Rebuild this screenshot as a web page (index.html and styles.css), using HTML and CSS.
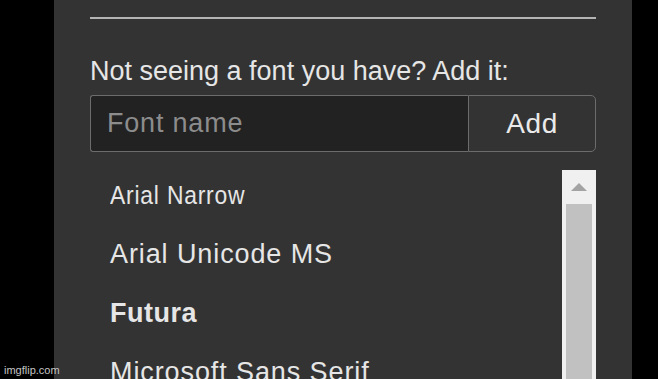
FILE: index.html
```html
<!DOCTYPE html>
<html>
<head>
    <title>Fonts</title>
    <meta name="viewport" content="width=device-width, initial-scale=1.0">
    <link rel="stylesheet" href="styles.css">
</head>
<body>
    <div class="side"></div>
    <div class="panel">
        <div class="rule"></div>
        <div class="label">Not seeing a font you have? Add it:</div>
        <div class="add-row">
            <input type="text" class="font-input" placeholder="Font name">
            <button class="add-button">Add</button>
        </div>
        <div class="list-box">
            <div class="font-list">
                <div class="font-item"><span class="narrow">Arial Narrow</span></div>
                <div class="font-item">Arial Unicode MS</div>
                <div class="font-item futura">Futura</div>
                <div class="font-item">Microsoft Sans Serif</div>
            </div>
            <div class="scrollbar">
                <div class="scroll-up"><span class="arrow"></span></div>
                <div class="scroll-thumb"></div>
            </div>
        </div>
    </div>
    <div class="watermark">imgflip.com</div>
</body>
</html>
```

FILE: styles.css
```css
html, body {
    height: 100%;
    margin: 0;
    overflow: hidden;
}
body {
    display: flex;
    background-color: #000;
    font-family: "Liberation Sans", Arial, sans-serif;
    position: relative;
}
.side {
    width: 54px;
    flex: none;
}
.panel {
    width: 578px;
    flex: none;
    box-sizing: border-box;
    padding: 17px 36px 0 36px;
    background-color: #333;
    display: flex;
    flex-direction: column;
    overflow: hidden;
}
.panel > * {
    flex: none;
}
.rule {
    height: 2px;
    background-color: #b4b4b4;
}
.label {
    margin-top: 36px;
    font-size: 27px;
    line-height: 32px;
    color: #e6e6e6;
}
.add-row {
    display: flex;
    margin-top: 8px;
    height: 57px;
}
.font-input {
    width: 378px;
    box-sizing: border-box;
    margin: 0;
    padding: 0 0 0 16px;
    background-color: #222;
    border: 1px solid #6c6c6c;
    border-right: none;
    border-radius: 3px 0 0 3px;
    font-family: "Liberation Sans", Arial, sans-serif;
    font-size: 27px;
    letter-spacing: 0.8px;
    color: #e6e6e6;
    outline: none;
}
.font-input::placeholder {
    color: #8c8c8c;
}
.add-button {
    flex: 1;
    margin: 0;
    padding: 0;
    background-color: #333;
    border: 1px solid #6c6c6c;
    border-radius: 0 5px 5px 0;
    font-family: "Liberation Sans", Arial, sans-serif;
    font-size: 28px;
    letter-spacing: 0.6px;
    color: #eaeaea;
}
.list-box {
    display: flex;
    margin-top: 14px;
}
.font-list {
    flex: 1;
    padding-left: 20px;
}
.font-item {
    height: 59px;
    line-height: 59px;
    font-size: 27px;
    letter-spacing: 0.9px;
    color: #e6e6e6;
    white-space: nowrap;
}
.narrow {
    display: inline-block;
    font-size: 26px;
    transform: scaleX(0.88);
    transform-origin: left center;
}
.futura {
    font-weight: bold;
    letter-spacing: 0.5px;
}
.scrollbar {
    width: 34px;
    margin-top: 4px;
    height: 260px;
    background-color: #f0f0f0;
    display: flex;
    flex-direction: column;
}
.scroll-up {
    height: 34px;
    display: flex;
    justify-content: center;
    align-items: center;
}
.arrow {
    width: 0;
    height: 0;
    border-left: 8px solid transparent;
    border-right: 8px solid transparent;
    border-bottom: 8px solid #a3a3a3;
}
.scroll-thumb {
    flex: 1;
    margin: 0 4px;
    background-color: #c1c1c1;
}
.watermark {
    position: absolute;
    left: 4px;
    bottom: 3px;
    font-size: 11px;
    color: #c4c4c4;
}
```
